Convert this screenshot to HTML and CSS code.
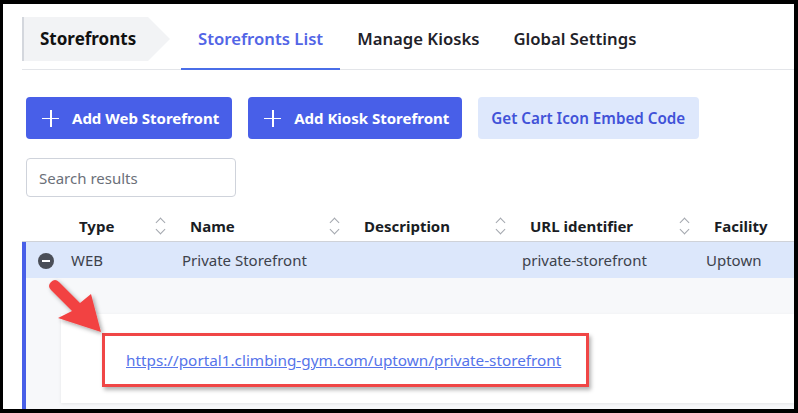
FILE: index.html
```html
<!DOCTYPE html>
<html lang="en">
<head>
    <meta charset="UTF-8">
    <title>Storefronts List</title>
    <link rel="stylesheet" href="styles.css">
</head>
<body>
    <div class="frame">
        <div class="page">
            <!-- Top navigation -->
            <nav class="topnav">
                <div class="crumb">Storefronts</div>
                <a class="tab active">Storefronts List</a>
                <a class="tab">Manage Kiosks</a>
                <a class="tab">Global Settings</a>
            </nav>

            <!-- Actions -->
            <div class="actions">
                <button class="btn primary"><span class="plus"></span>Add Web Storefront</button>
                <button class="btn primary"><span class="plus"></span>Add Kiosk Storefront</button>
                <button class="btn light">Get Cart Icon Embed Code</button>
            </div>

            <div class="search-wrap">
                <input class="search" type="text" placeholder="Search results">
            </div>

            <!-- Table -->
            <div class="table">
                <div class="thead">
                    <div class="th"></div>
                    <div class="th">Type<span class="sort"></span></div>
                    <div class="th">Name<span class="sort"></span></div>
                    <div class="th">Description<span class="sort"></span></div>
                    <div class="th">URL identifier<span class="sort"></span></div>
                    <div class="th">Facility</div>
                </div>
                <div class="open-group">
                    <div class="tr">
                        <div class="td"><span class="collapse"></span></div>
                        <div class="td">WEB</div>
                        <div class="td">Private Storefront</div>
                        <div class="td"></div>
                        <div class="td">private-storefront</div>
                        <div class="td">Uptown</div>
                    </div>
                    <div class="details">
                        <div class="card">
                            <div class="callout">
                                <a class="link" href="#">https://portal1.climbing-gym.com/uptown/private-storefront</a>
                            </div>
                        </div>
                    </div>
                </div>
            </div>
        </div>

        <!-- annotation arrow -->
        <svg class="arrow" viewBox="3 4 791 405" width="791" height="405">
            <defs>
                <filter id="shadow" x="-20%" y="-20%" width="160%" height="160%">
                    <feDropShadow dx="2" dy="2" stdDeviation="2" flood-color="#000" flood-opacity="0.35"/>
                </filter>
            </defs>
            <path filter="url(#shadow)" fill="#f24343"
                  d="M51 290 L72 311 L58 318 L101 332 L91 294 L80 303 L59 282 Q55 278 51 282 Q47 286 51 290 Z"/>
        </svg>
    </div>
</body>
</html>
```

FILE: styles.css
```css
body {
    margin: 0;
    background: #000;
    font-family: "Noto Sans", "Open Sans", sans-serif;
    color: #1f2229;
}
.frame {
    position: relative;
    margin: 4px 4px 4px 3px;
    height: 405px;
    background: #fff;
    overflow: hidden;
}
.page {
    padding: 13px 0 0 19px;
}

/* top nav */
.topnav {
    display: flex;
    align-items: flex-start;
    height: 52px;
    border-bottom: 1px solid #e3e5e9;
}
.crumb {
    position: relative;
    height: 44px;
    line-height: 44px;
    width: 108px;
    padding-left: 16px;
    background: #f2f3f5;
    border-left: 2px solid #d4d7dd;
    font-weight: 700;
    font-size: 17px;
    color: #111;
    margin-right: 33px;
}
.crumb::after {
    content: "";
    position: absolute;
    right: -22px;
    top: 0;
    border-left: 22px solid #f2f3f5;
    border-top: 22px solid transparent;
    border-bottom: 22px solid transparent;
}
.tab {
    height: 51px;
    line-height: 44px;
    padding: 0 17px;
    font-size: 16.7px;
    font-weight: 600;
    color: #1f2229;
    border-bottom: 2px solid transparent;
}
.tab.active {
    color: #5265e6;
    border-bottom-color: #4a6ee8;
}

/* buttons */
.actions {
    display: flex;
    gap: 16px;
    margin: 27px 0 0 4px;
}
.btn {
    display: flex;
    align-items: center;
    height: 42px;
    border: none;
    border-radius: 4px;
    font-family: inherit;
    font-size: 15px;
    cursor: pointer;
}
.btn.primary {
    background: #485fe8;
    color: #fff;
    font-weight: 700;
    padding: 0 13px 0 16px;
}
.btn.light {
    background: #dee8fc;
    color: #4152d8;
    font-weight: 600;
    font-size: 15.2px;
    padding: 0 14px 0 13px;
}
.plus {
    position: relative;
    width: 17px;
    height: 17px;
    margin-right: 13px;
}
.plus::before, .plus::after {
    content: "";
    position: absolute;
    background: #fff;
}
.plus::before {
    left: 8px;
    top: 0;
    width: 1.6px;
    height: 17px;
}
.plus::after {
    top: 8px;
    left: 0;
    height: 1.6px;
    width: 17px;
}

/* search */
.search-wrap {
    margin: 19px 0 0 4px;
}
.search {
    width: 210px;
    height: 39px;
    box-sizing: border-box;
    border: 1px solid #cfd3db;
    border-radius: 4px;
    padding: 0 12px;
    font-family: inherit;
    font-size: 15px;
    color: #333;
    outline: none;
}
.search::placeholder {
    color: #6b7079;
}

/* table */
.table {
    margin-top: 13px;
}
.thead {
    display: grid;
    grid-template-columns: 41px 111px 174px 166px 184px 1fr;
    height: 31px;
    border-bottom: 1px solid #cfd2d8;
}
.tr {
    display: grid;
    grid-template-columns: 37px 111px 174px 166px 184px 1fr;
    height: 36px;
    background: #dce7fb;
}
.th {
    display: flex;
    align-items: center;
    padding-left: 16px;
    font-size: 15px;
    font-weight: 700;
    color: #1a1d24;
}
.sort {
    position: relative;
    margin-left: auto;
    margin-right: 9px;
    width: 10px;
    height: 18px;
}
.sort::before, .sort::after {
    content: "";
    position: absolute;
    left: 2px;
    width: 6px;
    height: 6px;
    border-color: #a3a7ae;
    border-style: solid;
    border-width: 1px 0 0 1px;
}
.sort::before {
    top: 2px;
    transform: rotate(45deg);
}
.sort::after {
    bottom: 2px;
    transform: rotate(225deg);
}
.open-group {
    border-left: 4px solid #485fe8;
}
.td {
    display: flex;
    align-items: center;
    padding-left: 8px;
    font-size: 15px;
    color: #3d424c;
    white-space: nowrap;
}
.tr .td:first-child {
    padding-left: 12px;
}
.collapse {
    position: relative;
    width: 16px;
    height: 16px;
    border-radius: 50%;
    background: #4a4e57;
    margin-top: 1px;
}
.collapse::after {
    content: "";
    position: absolute;
    left: 4px;
    top: 7px;
    width: 8px;
    height: 2px;
    background: #fff;
}
.details {
    height: 140px;
    background: #f7f8fa;
    padding: 36px 0 0 35px;
}
.card {
    background: #fff;
    height: 89px;
    box-sizing: border-box;
    padding: 19px 0 0 41px;
    box-shadow: 0 1px 3px rgba(0, 0, 0, 0.08);
}
.callout {
    display: inline-block;
    border: 3px solid #f04646;
    line-height: 48px;
    padding: 0 25px 0 21px;
    box-shadow: 2px 3px 4px rgba(0, 0, 0, 0.3);
}
.link {
    color: #5674ea;
    font-size: 15.3px;
}

/* annotation */
.arrow {
    position: absolute;
    left: 0;
    top: 0;
    pointer-events: none;
}
```
